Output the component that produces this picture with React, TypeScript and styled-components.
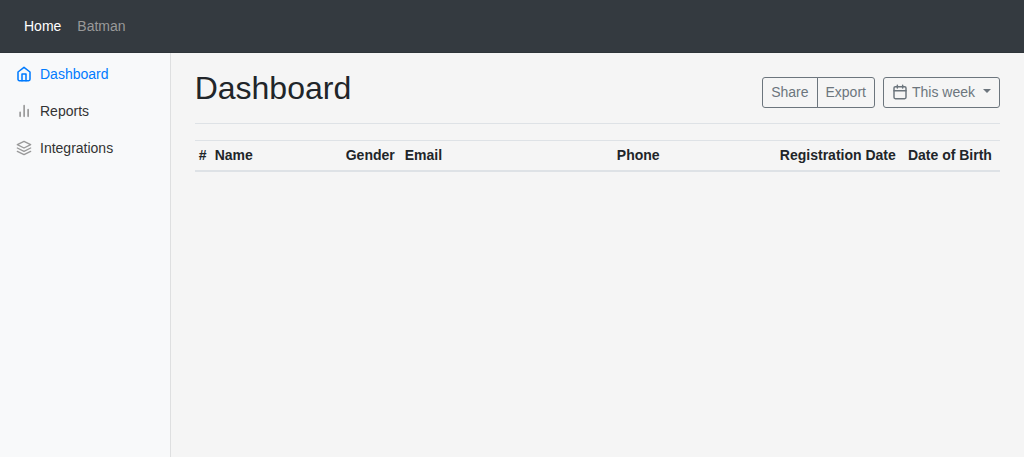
import React from "react";
import styled, { createGlobalStyle } from "styled-components";

const GlobalStyle = createGlobalStyle`
  *, *::before, *::after { box-sizing: border-box; }
  body {
    margin: 0;
    background: #f5f5f5;
    color: #212529;
    font: 14px/21px "Liberation Sans", Arial, sans-serif;
  }
`;

const Page = styled.div`
  display: flex;
  flex-direction: column;
  min-height: 100vh;
`;

const Navbar = styled.nav`
  display: flex;
  padding: 16px;
  background: #343a40;
  box-shadow: inset 0 -1px 0 rgba(0, 0, 0, 0.1);
`;

const NavbarLink = styled.a<{ $active?: boolean }>`
  padding: 0 8px;
  color: ${(p) => (p.$active ? "#fff" : "#999")};
  text-decoration: none;
`;

const Body = styled.div`
  display: flex;
  flex: 1;
`;

const Sidebar = styled.aside`
  flex: 0 0 16.6667%;
  padding-top: 3px;
  background: #f8f9fa;
  box-shadow: inset -1px 0 0 rgba(0, 0, 0, 0.1);
`;

const SideList = styled.ul`
  list-style: none;
  margin: 0;
  padding: 0;
`;

const SideLink = styled.a<{ $active?: boolean }>`
  display: flex;
  align-items: center;
  gap: 8px;
  padding: 8px 16px;
  color: ${(p) => (p.$active ? "#007bff" : "#333")};
  text-decoration: none;

  svg {
    color: ${(p) => (p.$active ? "inherit" : "#999")};
  }
`;

const Icon = styled.svg.attrs({ viewBox: "0 0 24 24", "aria-hidden": true })<{ $stroke?: number }>`
  width: 16px;
  height: 16px;
  margin-bottom: 1px;
  flex: none;
  fill: none;
  stroke: currentColor;
  stroke-width: ${(p) => p.$stroke ?? 2};
  stroke-linecap: round;
  stroke-linejoin: round;
`;

const Main = styled.main`
  flex: 1;
  min-width: 0;
  padding: 16px 24px;
`;

const TitleBar = styled.header`
  display: flex;
  flex-wrap: wrap;
  align-items: flex-end;
  justify-content: space-between;
  padding-bottom: 15px;
  margin-bottom: 16px;
  border-bottom: 1px solid #dee2e6;
`;

const Title = styled.h1`
  margin: 0;
  padding-bottom: 1px;
  font-size: 32px;
  line-height: 38px;
  font-weight: 400;
`;

const Toolbar = styled.div`
  display: flex;
  gap: 8px;
`;

const Button = styled.button`
  display: flex;
  align-items: center;
  gap: 4px;
  padding: 4px 8px;
  border: 1px solid #6c757d;
  border-radius: 3px;
  background: transparent;
  color: #6c757d;
  font: inherit;
  cursor: pointer;
`;

const ButtonGroup = styled.div`
  display: flex;

  ${Button}:first-child {
    border-radius: 3px 0 0 3px;
  }
  ${Button}:last-child {
    margin-left: -1px;
    border-radius: 0 3px 3px 0;
  }
`;

const Caret = styled.span`
  margin: 0 0 3px 4px;
  border-top: 4px solid;
  border-left: 4px solid transparent;
  border-right: 4px solid transparent;
`;

const Table = styled.table`
  width: 100%;
  table-layout: fixed;
  border-collapse: collapse;
`;

const Th = styled.th<{ $width: number }>`
  width: ${(p) => p.$width}px;
  padding: 4px;
  border-top: 1px solid #dee2e6;
  border-bottom: 2px solid #dee2e6;
  text-align: left;
  white-space: nowrap;
`;

const columns = [
  { label: "#", width: 16 },
  { label: "Name", width: 131 },
  { label: "Gender", width: 59 },
  { label: "Email", width: 212 },
  { label: "Phone", width: 163 },
  { label: "Registration Date", width: 128 },
  { label: "Date of Birth", width: 96 },
];

const HomeIcon = () => (
  <Icon $stroke={2.3}>
    <path d="M3 9l9-7 9 7v11a2 2 0 0 1-2 2H5a2 2 0 0 1-2-2z" />
    <path d="M9 22V12h6v10" />
  </Icon>
);

const ChartIcon = () => (
  <Icon $stroke={2.5}>
    <path d="M18.2 20V10M12.2 20V4M6.2 20v-6" />
  </Icon>
);

const LayersIcon = () => (
  <Icon>
    <polygon points="12 2 2 7 12 12 22 7 12 2" />
    <polyline points="2 17 12 22 22 17" />
    <polyline points="2 12 12 17 22 12" />
  </Icon>
);

const CalendarIcon = () => (
  <Icon $stroke={2.2}>
    <rect x="3" y="4" width="18" height="18" rx="2" ry="2" />
    <path d="M16 2v4M8 2v4M3 10h18" />
  </Icon>
);

export default function App() {
  return (
    <Page>
      <GlobalStyle />
      <Navbar>
        <NavbarLink href="#home" $active>Home</NavbarLink>
        <NavbarLink href="#batman">Batman</NavbarLink>
      </Navbar>
      <Body>
        <Sidebar>
          <SideList>
            <li><SideLink href="#dashboard" $active><HomeIcon />Dashboard</SideLink></li>
            <li><SideLink href="#reports"><ChartIcon />Reports</SideLink></li>
            <li><SideLink href="#integrations"><LayersIcon />Integrations</SideLink></li>
          </SideList>
        </Sidebar>
        <Main>
          <TitleBar>
            <Title>Dashboard</Title>
            <Toolbar>
              <ButtonGroup>
                <Button type="button">Share</Button>
                <Button type="button">Export</Button>
              </ButtonGroup>
              <Button type="button" aria-haspopup="menu">
                <CalendarIcon />
                This week
                <Caret />
              </Button>
            </Toolbar>
          </TitleBar>
          <Table>
            <thead>
              <tr>
                {columns.map((c) => (
                  <Th key={c.label} scope="col" $width={c.width}>{c.label}</Th>
                ))}
              </tr>
            </thead>
          </Table>
        </Main>
      </Body>
    </Page>
  );
}
